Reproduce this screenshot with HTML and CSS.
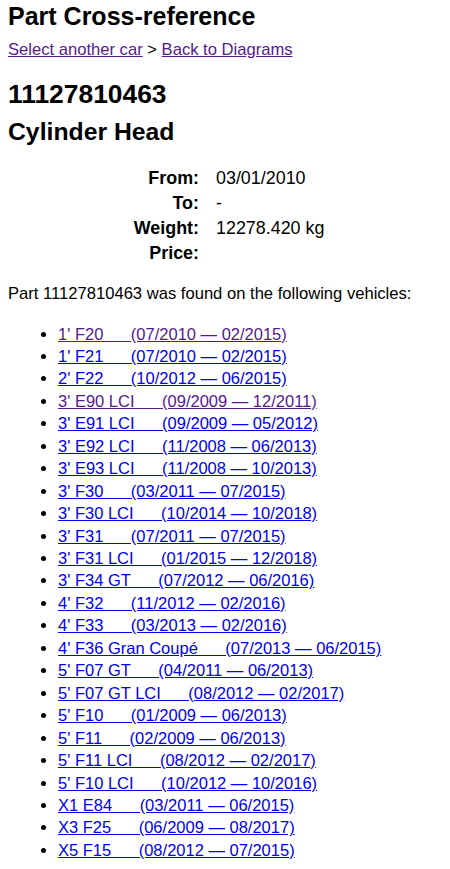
FILE: index.html
```html
<!DOCTYPE html>
<html lang="en">
<head>
<meta charset="utf-8">
<title>Part Cross-reference</title>
<link rel="stylesheet" href="styles.css">
</head>
<body>
<h1 class="title">Part Cross-reference</h1>
<div class="crumbs"><a class="seen" href="#cars">Select another car</a> &gt; <a class="seen" href="#diagrams">Back to Diagrams</a></div>
<h2 class="partno">11127810463</h2>
<h3 class="partname">Cylinder Head</h3>
<div class="info">
  <div class="label">From:</div><div class="value">03/01/2010</div>
  <div class="label">To:</div><div class="value">-</div>
  <div class="label">Weight:</div><div class="value">12278.420 kg</div>
  <div class="label">Price:</div><div class="value"></div>
</div>
<p class="found">Part 11127810463 was found on the following vehicles:</p>
<ul class="cars">
  <li><a class="seen" href="#1">1' F20&nbsp;&nbsp;&nbsp;&nbsp;&nbsp;&nbsp;(07/2010 — 02/2015)</a></li>
  <li><a href="#2">1' F21&nbsp;&nbsp;&nbsp;&nbsp;&nbsp;&nbsp;(07/2010 — 02/2015)</a></li>
  <li><a href="#3">2' F22&nbsp;&nbsp;&nbsp;&nbsp;&nbsp;&nbsp;(10/2012 — 06/2015)</a></li>
  <li><a class="seen" href="#4">3' E90 LCI&nbsp;&nbsp;&nbsp;&nbsp;&nbsp;&nbsp;(09/2009 — 12/2011)</a></li>
  <li><a href="#5">3' E91 LCI&nbsp;&nbsp;&nbsp;&nbsp;&nbsp;&nbsp;(09/2009 — 05/2012)</a></li>
  <li><a href="#6">3' E92 LCI&nbsp;&nbsp;&nbsp;&nbsp;&nbsp;&nbsp;(11/2008 — 06/2013)</a></li>
  <li><a href="#7">3' E93 LCI&nbsp;&nbsp;&nbsp;&nbsp;&nbsp;&nbsp;(11/2008 — 10/2013)</a></li>
  <li><a href="#8">3' F30&nbsp;&nbsp;&nbsp;&nbsp;&nbsp;&nbsp;(03/2011 — 07/2015)</a></li>
  <li><a href="#9">3' F30 LCI&nbsp;&nbsp;&nbsp;&nbsp;&nbsp;&nbsp;(10/2014 — 10/2018)</a></li>
  <li><a href="#10">3' F31&nbsp;&nbsp;&nbsp;&nbsp;&nbsp;&nbsp;(07/2011 — 07/2015)</a></li>
  <li><a href="#11">3' F31 LCI&nbsp;&nbsp;&nbsp;&nbsp;&nbsp;&nbsp;(01/2015 — 12/2018)</a></li>
  <li><a href="#12">3' F34 GT&nbsp;&nbsp;&nbsp;&nbsp;&nbsp;&nbsp;(07/2012 — 06/2016)</a></li>
  <li><a href="#13">4' F32&nbsp;&nbsp;&nbsp;&nbsp;&nbsp;&nbsp;(11/2012 — 02/2016)</a></li>
  <li><a href="#14">4' F33&nbsp;&nbsp;&nbsp;&nbsp;&nbsp;&nbsp;(03/2013 — 02/2016)</a></li>
  <li><a href="#15">4' F36 Gran Coupé&nbsp;&nbsp;&nbsp;&nbsp;&nbsp;&nbsp;(07/2013 — 06/2015)</a></li>
  <li><a href="#16">5' F07 GT&nbsp;&nbsp;&nbsp;&nbsp;&nbsp;&nbsp;(04/2011 — 06/2013)</a></li>
  <li><a href="#17">5' F07 GT LCI&nbsp;&nbsp;&nbsp;&nbsp;&nbsp;&nbsp;(08/2012 — 02/2017)</a></li>
  <li><a href="#18">5' F10&nbsp;&nbsp;&nbsp;&nbsp;&nbsp;&nbsp;(01/2009 — 06/2013)</a></li>
  <li><a href="#19">5' F11&nbsp;&nbsp;&nbsp;&nbsp;&nbsp;&nbsp;(02/2009 — 06/2013)</a></li>
  <li><a href="#20">5' F11 LCI&nbsp;&nbsp;&nbsp;&nbsp;&nbsp;&nbsp;(08/2012 — 02/2017)</a></li>
  <li><a href="#21">5' F10 LCI&nbsp;&nbsp;&nbsp;&nbsp;&nbsp;&nbsp;(10/2012 — 10/2016)</a></li>
  <li><a href="#22">X1 E84&nbsp;&nbsp;&nbsp;&nbsp;&nbsp;&nbsp;(03/2011 — 06/2015)</a></li>
  <li><a href="#23">X3 F25&nbsp;&nbsp;&nbsp;&nbsp;&nbsp;&nbsp;(06/2009 — 08/2017)</a></li>
  <li><a href="#24">X5 F15&nbsp;&nbsp;&nbsp;&nbsp;&nbsp;&nbsp;(08/2012 — 07/2015)</a></li>
</ul>
</body>
</html>
```
FILE: styles.css
```css
html, body {
  background: #ffffff;
}
body {
  margin: 0;
  padding: 0 8px;
  font-family: "Liberation Sans", Arial, sans-serif;
  font-size: 16.5px;
  color: #000000;
}
a {
  color: #0000ee;
  text-decoration: underline;
}
a.seen {
  color: #551a8b;
}
.title {
  margin: 0;
  font-size: 25px;
  line-height: 32px;
  font-weight: bold;
}
.crumbs {
  margin-top: 6px;
  line-height: 24px;
  font-size: 16.6px;
}
.partno {
  margin: 14px 0 0;
  font-size: 26.4px;
  line-height: 36px;
  font-weight: bold;
}
.partname {
  margin: 4px 0 0;
  font-size: 24.75px;
  line-height: 32px;
  font-weight: bold;
}
.info {
  display: grid;
  grid-template-columns: 191px auto;
  column-gap: 17px;
  margin-top: 18px;
  font-size: 17.9px;
  line-height: 25px;
}
.info .label {
  text-align: right;
  font-weight: bold;
}
.found {
  margin: 17px 0 0;
  line-height: 22px;
  font-size: 16.6px;
}
.cars {
  margin: 17.5px 0 0;
  padding-left: 50px;
  line-height: 22.45px;
}
```
